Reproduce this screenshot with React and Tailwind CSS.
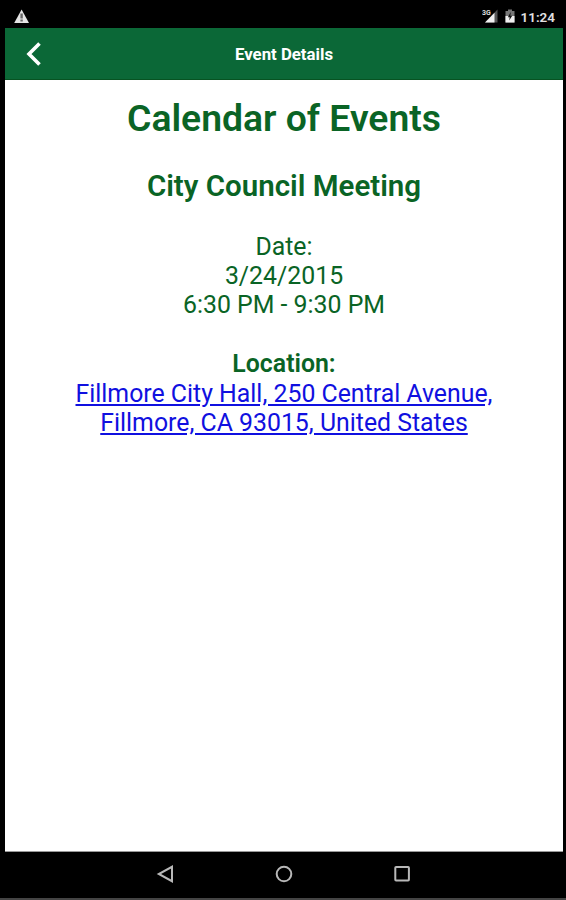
import React from 'react';

const StatusBar = () => (
  <div className="flex h-7 items-center justify-between pt-1 pr-[11px] pl-3.5">
    <svg className="h-4 w-4" viewBox="0 0 16 16">
      <path d="M7.6 1.5L15 15H0.2Z" fill="#e4e4e4" />
      <path d="M7.6 5.6V10.5M7.6 11.5V13.5" stroke="#666" strokeWidth="2.4" />
    </svg>
    <div className="flex items-center">
      <svg className="h-4 w-4" viewBox="0 0 16 16">
        <path d="M15.5 1.5V14.5H3Z" fill="#555" />
        <path d="M12.5 4.8V14.5H3Z" fill="#f0f0f0" />
        <text x="0" y="7" fontSize="7" fontWeight="700" fill="#ddd" fontFamily="Roboto, sans-serif">3G</text>
      </svg>
      <svg className="ml-1.5 h-4 w-3" viewBox="0 0 12 16">
        <path d="M4 1.5H8V3H10.5V14.5H1.5V3H4Z" fill="#777" />
        <path d="M1.5 8H10.5V14.5H1.5Z" fill="#f0f0f0" />
        <path d="M6.8 4L3.8 9.2H5.7L5.2 12.5L8.2 7.8H6.3Z" fill="#111" />
      </svg>
      <span className="ml-1 pt-px text-[13.5px] leading-4 font-semibold text-[#e0e0e0]">11:24</span>
    </div>
  </div>
);

const Header = () => (
  <header className="grid h-[52px] grid-cols-[60px_1fr_60px] items-center border-b border-[#075322] bg-[#0b6837] text-white">
    <button type="button" className="pl-5">
      <svg className="h-7 w-5" viewBox="0 0 20 28" fill="none" stroke="currentColor" strokeWidth="3.6">
        <path d="M14.5 3.5L4 14L14.5 24.5" />
      </svg>
    </button>
    <h1 className="pt-0.5 text-center text-[16.8px] font-bold">Event Details</h1>
  </header>
);

const NavBar = () => (
  <nav className="flex h-12 items-center justify-center gap-[98px] border-b-2 border-[#444] pb-0.5 pl-px text-[#b8b8b8]">
    <svg className="h-5 w-5" viewBox="0 0 20 20" fill="none" stroke="currentColor" strokeWidth="2">
      <path d="M16 2.8V17.2L2.8 10Z" />
    </svg>
    <svg className="h-5 w-5" viewBox="0 0 20 20" fill="none" stroke="currentColor" strokeWidth="2">
      <circle cx="10" cy="10" r="7.3" />
    </svg>
    <svg className="h-5 w-5" viewBox="0 0 20 20" fill="none" stroke="currentColor" strokeWidth="2">
      <rect x="3.3" y="3" width="13.6" height="13.6" rx="0.8" />
    </svg>
  </nav>
);

const App = () => {
  return (
    <div className="flex h-[900px] w-[566px] flex-col bg-black font-['Roboto',sans-serif]">
      <StatusBar />
      <div className="mr-[3px] ml-[5px] flex flex-1 flex-col">
        <Header />
        <main className="flex-1 border-b border-[#999] bg-white text-center text-[24.85px] leading-[29.4px] text-[#0a6425]">
          <h2 className="pt-4 text-[37.3px] leading-11 font-semibold">Calendar of Events</h2>
          <h3 className="mt-[30px] text-[29.5px] leading-8 font-semibold">City Council Meeting</h3>
          <p className="mt-[29.6px]">
            Date:<br />
            3/24/2015<br />
            6:30 PM - 9:30 PM
          </p>
          <p className="mt-[29.4px] font-semibold">Location:</p>
          <a href="#" className="text-[#1010e0] underline">
            Fillmore City Hall, 250 Central Avenue,<br />
            Fillmore, CA 93015, United States
          </a>
        </main>
      </div>
      <NavBar />
    </div>
  );
};

export default App;
